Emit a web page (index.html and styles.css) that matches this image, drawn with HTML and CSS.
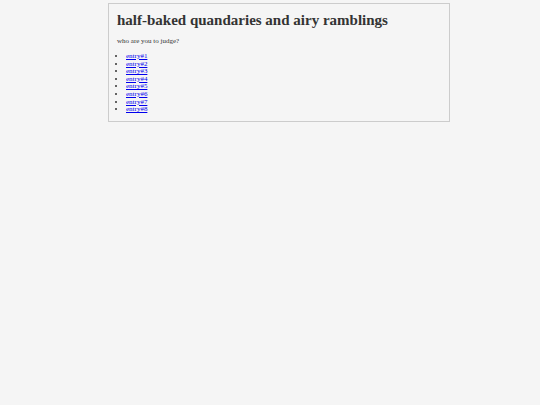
FILE: index.html
```html
<!DOCTYPE html>
<html>
<head>
<meta charset="utf-8">
<link rel="stylesheet" href="styles.css">
</head>
<body>
<div class="page">
  <h1 class="title">half-baked quandaries and airy ramblings</h1>
  <p class="tagline">who are you to judge?</p>
  <ul class="entries">
    <li><a href="#">entry#1</a></li>
    <li><a href="#">entry#2</a></li>
    <li><a href="#">entry#3</a></li>
    <li><a href="#">entry#4</a></li>
    <li><a href="#">entry#5</a></li>
    <li><a href="#">entry#6</a></li>
    <li><a href="#">entry#7</a></li>
    <li><a href="#">entry#8</a></li>
  </ul>
</div>
</body>
</html>
```
FILE: styles.css
```css
html, body {
  margin: 0;
  padding: 0;
  background: #f5f5f5;
}
body {
  font-family: "Liberation Serif", "Times New Roman", serif;
  color: #333;
  padding: 3px 0 0 108px;
}
.page {
  box-sizing: border-box;
  width: 342px;
  border: 1px solid #cccccc;
  padding: 7px 8px 7px 8px;
}
.title {
  margin: 0;
  font-size: 15px;
  line-height: 18px;
  font-weight: bold;
  color: #333;
}
.tagline {
  margin: 8px 0 0 0;
  font-size: 7px;
  line-height: 9px;
}
.entries {
  margin: 7px 0 0 0;
  padding-left: 9px;
  font-size: 7px;
  line-height: 7.6px;
}
.entries a {
  color: #0000ee;
}
```
